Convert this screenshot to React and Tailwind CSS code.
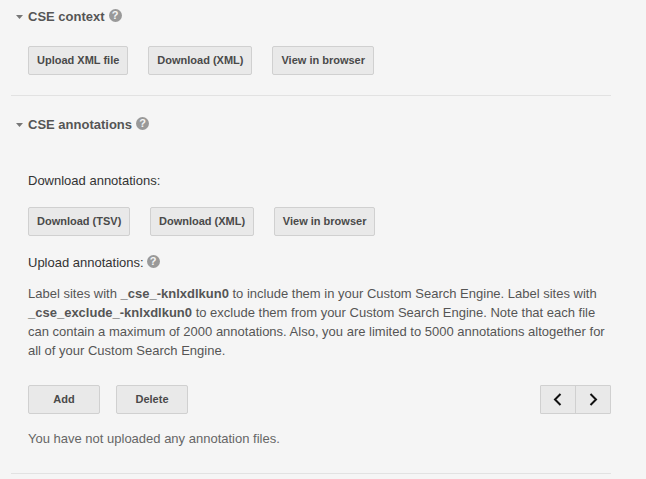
const HelpIcon = ({ className = 'ml-[3px]' }) => (
  <span className={`inline-flex h-[13px] w-[13px] items-center justify-center rounded-full bg-[#999999] text-[11px] font-bold leading-none text-[#f5f5f5] ${className}`}>
    ?
  </span>
);

const Btn = ({ children, className = '' }) => (
  <button className={`h-[29px] rounded-[2px] border border-[#d0d0d0] bg-[#e9e9e9] px-[8px] text-[11px] font-bold text-[#4a4a4a] ${className}`}>
    {children}
  </button>
);

const Heading = ({ children }) => (
  <div className="flex h-[17px] items-center">
    <svg className="ml-[5px] mr-[5px]" width="7" height="4" viewBox="0 0 7 4" fill="#777777"><path d="M0 0 H7 L3.5 4 Z" /></svg>
    <h3 className="text-[13px] font-bold text-[#555555]">{children}</h3>
    <span className="-mt-[3px] flex">
      <HelpIcon className="ml-[4px]" />
    </span>
  </div>
);

export default function App() {
  return (
    <div className="h-[479px] overflow-hidden bg-[#f5f5f5] font-['Liberation_Sans',Arial,sans-serif]">
      <div className="ml-[11px] w-[600px]">
        <section className="h-[96px] border-b border-[#e2e2e2] pt-[8px]">
          <Heading>CSE context</Heading>
          <div className="ml-[17px] mt-[21px] flex gap-[20px]">
            <Btn>Upload XML file</Btn>
            <Btn>Download (XML)</Btn>
            <Btn>View in browser</Btn>
          </div>
        </section>

        <section className="h-[378px] border-b border-[#e2e2e2] pt-[20px] text-[13px]">
          <Heading>CSE annotations</Heading>
          <div className="pl-[17px]">
            <p className="mt-[38px] leading-[19px] text-[#333333]">Download annotations:</p>
            <div className="mt-[17px] flex gap-[19.7px]">
              <Btn>Download (TSV)</Btn>
              <Btn>Download (XML)</Btn>
              <Btn>View in browser</Btn>
            </div>
            <div className="mt-[17px] flex items-center leading-[19px] text-[#333333]">
              Upload annotations:
              <span className="-mt-[3px] flex">
                <HelpIcon />
              </span>
            </div>
            <p className="mt-[12px] leading-[19px] text-[#555555]">
              Label sites with <b>_cse_-knlxdlkun0</b> to include them in your Custom Search Engine. Label sites with{' '}
              <b>_cse_exclude_-knlxdlkun0</b> to exclude them from your Custom Search Engine. Note that each file can contain a maximum of 2000 annotations. Also, you are limited to 5000 annotations altogether for all of your Custom Search Engine.
            </p>
            <div className="mt-[25px] flex items-center justify-between">
              <div className="flex gap-[16px]">
                <Btn className="w-[72px]">Add</Btn>
                <Btn className="w-[72px]">Delete</Btn>
              </div>
              <div className="flex h-[29px] rounded-[1px] border border-[#d0d0d0] bg-[#e9e9e9]">
                <button className="flex w-[35px] items-center justify-center border-r border-[#d0d0d0] pr-[1px]">
                  <svg width="9" height="13" viewBox="0 0 9 13" fill="none" stroke="#111111" strokeWidth="2"><path d="M7.5 1 L2 6.5 L7.5 12" /></svg>
                </button>
                <button className="flex w-[34px] items-center justify-center">
                  <svg width="9" height="13" viewBox="0 0 9 13" fill="none" stroke="#111111" strokeWidth="2"><path d="M1.5 1 L7 6.5 L1.5 12" /></svg>
                </button>
              </div>
            </div>
            <p className="mt-[15px] leading-[19px] text-[#666666]">You have not uploaded any annotation files.</p>
          </div>
        </section>
      </div>
    </div>
  );
}
